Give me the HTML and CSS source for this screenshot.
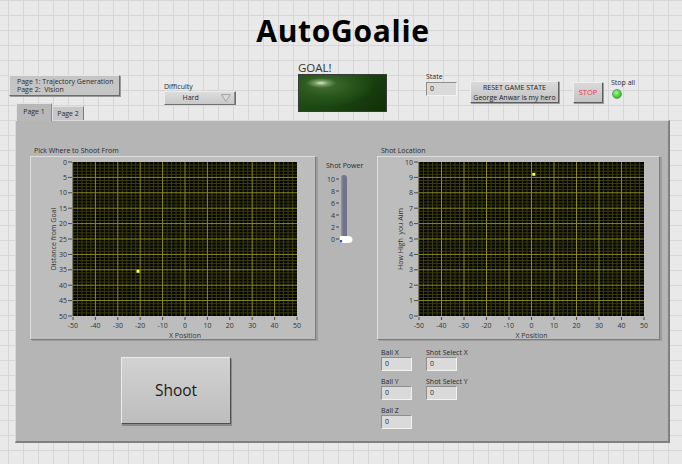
FILE: index.html
```html
<!DOCTYPE html>
<html>
<head>
<meta charset="utf-8">
<link rel="stylesheet" href="styles.css">
</head>
<body>
<div class="page">
  <h1 class="title">AutoGoalie</h1>
  <div class="toprow">
    <div class="leftcol">
      <div class="infobtn">Page 1: Trajectory Generation<br>Page 2:&nbsp; Vision</div>
      <div class="tabs">
        <div class="tab active">Page 1</div>
        <div class="tab">Page 2</div>
      </div>
    </div>
    <div class="difficulty">
      <div class="lbl">Difficulty</div>
      <div class="ring"><span class="ring-text">Hard</span><svg class="ring-arrow" width="10" height="8" viewBox="0 0 10 8"><polygon points="0.5,0.5 9.5,0.5 5,7.5" fill="#dadada" stroke="#a2a2a2" stroke-width="1"/></svg></div>
    </div>
    <div class="goal">
      <div class="goal-lbl">GOAL!</div>
      <div class="goal-led"></div>
    </div>
    <div class="state">
      <div class="lbl">State</div>
      <div class="num">0</div>
    </div>
    <div class="btn reset">RESET GAME STATE<br>George Anwar is my hero</div>
    <div class="btn stop">STOP</div>
    <div class="stopall">
      <div class="lbl">Stop all</div>
      <div class="led"></div>
    </div>
  </div>

  <div class="panel">
    <div class="col-left">
      <div class="glabel">Pick Where to Shoot From</div>
      <div class="frame frame-left">
        <svg class="chart" width="286" height="184" viewBox="0 0 286 184">
          <rect x="43" y="6" width="224" height="154" fill="#050500"/>
          <g transform="translate(43 6) scale(2.24 3.08)">
            <path class="minor" d="M0 0V50M2 0V50M4 0V50M6 0V50M8 0V50M12 0V50M14 0V50M16 0V50M18 0V50M22 0V50M24 0V50M26 0V50M28 0V50M32 0V50M34 0V50M36 0V50M38 0V50M42 0V50M44 0V50M46 0V50M48 0V50M52 0V50M54 0V50M56 0V50M58 0V50M62 0V50M64 0V50M66 0V50M68 0V50M72 0V50M74 0V50M76 0V50M78 0V50M82 0V50M84 0V50M86 0V50M88 0V50M92 0V50M94 0V50M96 0V50M98 0V50"/>
            <path class="minor" d="M0 1H100M0 2H100M0 3H100M0 4H100M0 6H100M0 7H100M0 8H100M0 9H100M0 11H100M0 12H100M0 13H100M0 14H100M0 16H100M0 17H100M0 18H100M0 19H100M0 21H100M0 22H100M0 23H100M0 24H100M0 26H100M0 27H100M0 28H100M0 29H100M0 31H100M0 32H100M0 33H100M0 34H100M0 36H100M0 37H100M0 38H100M0 39H100M0 41H100M0 42H100M0 43H100M0 44H100M0 46H100M0 47H100M0 48H100M0 49H100"/>
            <path class="major" d="M10 0V50M20 0V50M30 0V50M40 0V50M50 0V50M60 0V50M70 0V50M80 0V50M90 0V50M0 5H100M0 10H100M0 15H100M0 20H100M0 25H100M0 30H100M0 35H100M0 40H100M0 45H100"/>
          </g>
          <path class="tick" d="M38 6H42M38 21.4H42M38 36.8H42M38 52.2H42M38 67.6H42M38 83H42M38 98.4H42M38 113.8H42M38 129.2H42M38 144.6H42M38 160H42M43 161V164M65.4 161V164M87.8 161V164M110.2 161V164M132.6 161V164M155 161V164M177.4 161V164M199.8 161V164M222.2 161V164M244.6 161V164M267 161V164"/>
          <g class="ylab">
            <text x="37" y="8.5">0</text>
            <text x="37" y="23.9">5</text>
            <text x="37" y="39.3">10</text>
            <text x="37" y="54.7">15</text>
            <text x="37" y="70.1">20</text>
            <text x="37" y="85.5">25</text>
            <text x="37" y="100.9">30</text>
            <text x="37" y="116.3">35</text>
            <text x="37" y="131.7">40</text>
            <text x="37" y="147.1">45</text>
            <text x="37" y="162.5">50</text>
          </g>
          <g class="xlab">
            <text x="43" y="171.5">-50</text>
            <text x="65.4" y="171.5">-40</text>
            <text x="87.8" y="171.5">-30</text>
            <text x="110.2" y="171.5">-20</text>
            <text x="132.6" y="171.5">-10</text>
            <text x="155" y="171.5">0</text>
            <text x="177.4" y="171.5">10</text>
            <text x="199.8" y="171.5">20</text>
            <text x="222.2" y="171.5">30</text>
            <text x="244.6" y="171.5">40</text>
            <text x="267" y="171.5">50</text>
          </g>
          <text class="axtitle" x="155" y="181.5">X Position</text>
          <text class="axtitle" x="-83" y="25.5" transform="rotate(-90)">Distance from Goal</text>
          <rect class="pt" x="106.5" y="113.8" width="3" height="3"/>
        </svg>
      </div>
      <div class="shoot">Shoot</div>
    </div>

    <div class="col-slider">
      <div class="lbl">Shot Power</div>
      <svg class="slider" width="40" height="80" viewBox="0 0 40 80">
        <g class="slab">
          <text x="9" y="11.5">10</text>
          <text x="9" y="23.5">8</text>
          <text x="9" y="35.5">6</text>
          <text x="9" y="47.5">4</text>
          <text x="9" y="59.5">2</text>
          <text x="9" y="71.5">0</text>
        </g>
        <path class="tick" d="M10 9H13M10 21H13M10 33H13M10 45H13M10 57H13M10 69H13"/>
        <rect x="15" y="5" width="6" height="67" rx="3" fill="#72728c"/>
        <rect x="15" y="6" width="1.5" height="64" fill="#8e8ea6"/>
        <path class="thumb" d="M14 66H22Q26.5 66 26.5 69.5Q26.5 73 22 73H14Z"/>
        <rect x="14" y="70" width="2" height="2.5" fill="#2f4fd8"/>
      </svg>
    </div>

    <div class="col-right">
      <div class="glabel">Shot Location</div>
      <div class="frame frame-right">
        <svg class="chart" width="283" height="184" viewBox="0 0 283 184">
          <rect x="42" y="6" width="225" height="154" fill="#050500"/>
          <g transform="translate(42 6) scale(2.25 3.08)">
            <path class="minor" d="M0 0V50M2 0V50M4 0V50M6 0V50M8 0V50M12 0V50M14 0V50M16 0V50M18 0V50M22 0V50M24 0V50M26 0V50M28 0V50M32 0V50M34 0V50M36 0V50M38 0V50M42 0V50M44 0V50M46 0V50M48 0V50M52 0V50M54 0V50M56 0V50M58 0V50M62 0V50M64 0V50M66 0V50M68 0V50M72 0V50M74 0V50M76 0V50M78 0V50M82 0V50M84 0V50M86 0V50M88 0V50M92 0V50M94 0V50M96 0V50M98 0V50"/>
            <path class="minor" d="M0 1H100M0 2H100M0 3H100M0 4H100M0 6H100M0 7H100M0 8H100M0 9H100M0 11H100M0 12H100M0 13H100M0 14H100M0 16H100M0 17H100M0 18H100M0 19H100M0 21H100M0 22H100M0 23H100M0 24H100M0 26H100M0 27H100M0 28H100M0 29H100M0 31H100M0 32H100M0 33H100M0 34H100M0 36H100M0 37H100M0 38H100M0 39H100M0 41H100M0 42H100M0 43H100M0 44H100M0 46H100M0 47H100M0 48H100M0 49H100"/>
            <path class="major" d="M10 0V50M20 0V50M30 0V50M40 0V50M50 0V50M60 0V50M70 0V50M80 0V50M90 0V50M0 5H100M0 10H100M0 15H100M0 20H100M0 25H100M0 30H100M0 35H100M0 40H100M0 45H100"/>
          </g>
          <path class="tick" d="M37 6H41M37 21.4H41M37 36.8H41M37 52.2H41M37 67.6H41M37 83H41M37 98.4H41M37 113.8H41M37 129.2H41M37 144.6H41M37 160H41M42 161V164M64.5 161V164M87 161V164M109.5 161V164M132 161V164M154.5 161V164M177 161V164M199.5 161V164M222 161V164M244.5 161V164M267 161V164"/>
          <g class="ylab">
            <text x="36" y="8.5">10</text>
            <text x="36" y="23.9">9</text>
            <text x="36" y="39.3">8</text>
            <text x="36" y="54.7">7</text>
            <text x="36" y="70.1">6</text>
            <text x="36" y="85.5">5</text>
            <text x="36" y="100.9">4</text>
            <text x="36" y="116.3">3</text>
            <text x="36" y="131.7">2</text>
            <text x="36" y="147.1">1</text>
            <text x="36" y="162.5">0</text>
          </g>
          <g class="xlab">
            <text x="42" y="171.5">-50</text>
            <text x="64.5" y="171.5">-40</text>
            <text x="87" y="171.5">-30</text>
            <text x="109.5" y="171.5">-20</text>
            <text x="132" y="171.5">-10</text>
            <text x="154.5" y="171.5">0</text>
            <text x="177" y="171.5">10</text>
            <text x="199.5" y="171.5">20</text>
            <text x="222" y="171.5">30</text>
            <text x="244.5" y="171.5">40</text>
            <text x="267" y="171.5">50</text>
          </g>
          <text class="axtitle" x="154.5" y="181.5">X Position</text>
          <text class="axtitle" x="-83" y="25.5" transform="rotate(-90)">How High&#160; you Aim</text>
          <rect class="pt" x="155.3" y="16.8" width="3" height="3"/>
        </svg>
      </div>
      <div class="fields">
        <div class="field"><div class="lbl">Ball X</div><div class="num">0</div></div>
        <div class="field"><div class="lbl">Shot Select X</div><div class="num">0</div></div>
        <div class="field"><div class="lbl">Ball Y</div><div class="num">0</div></div>
        <div class="field"><div class="lbl">Shot Select Y</div><div class="num">0</div></div>
        <div class="field"><div class="lbl">Ball Z</div><div class="num">0</div></div>
      </div>
    </div>
  </div>
</div>
</body>
</html>
```
FILE: styles.css
```css
* { box-sizing: border-box; }
html, body { margin: 0; padding: 0; }
body {
  width: 682px;
  height: 464px;
  overflow: hidden;
  font-family: "Open Sans", "DejaVu Sans", sans-serif;
  font-size: 7px;
  color: #2a2a2a;
  background-color: #e9e9e9;
  background-image:
    linear-gradient(#d6d6d6 1px, transparent 1px),
    linear-gradient(90deg, #d6d6d6 1px, transparent 1px);
  background-size: 15px 15px;
  background-position: 8px 0;
}
.page { width: 682px; height: 464px; }

.title {
  margin: 0;
  height: 62px;
  padding: 11px 0 0 4px;
  font-size: 30px;
  font-weight: 700;
  letter-spacing: 0.7px;
  line-height: 40px;
  text-align: center;
  color: #000;
}

.toprow {
  display: flex;
  align-items: flex-start;
  height: 58px;
}
.lbl { line-height: 9px; white-space: nowrap; }

.leftcol {
  margin: 13px 0 0 9px;
  width: 111px;
  display: flex;
  flex-direction: column;
}
.infobtn {
  height: 21px;
  padding: 2px 0 0 7px;
  line-height: 8px;
  background: #c5c5c5;
  border: 1px solid;
  border-color: #e6e6e6 #6c6c6c #6c6c6c #e6e6e6;
  box-shadow: 1px 1px 0 #9a9a9a;
}
.tabs {
  margin: 7px 0 0 7px;
  height: 17px;
  display: flex;
  align-items: flex-end;
}
.tab {
  width: 32px;
  height: 14px;
  padding-top: 2px;
  text-align: center;
  background: #c7c7c7;
  border: 1px solid;
  border-bottom: none;
  border-color: #e2e2e2 #7a7a7a #7a7a7a #e2e2e2;
}
.tab.active {
  width: 36px;
  height: 18px;
  padding-top: 3px;
  background: #b8b8b8;
  border-right-color: #8a8a8a;
  position: relative;
  z-index: 1;
  margin-bottom: -1px;
}

.difficulty { margin: 20px 0 0 44px; }
.ring {
  width: 72px;
  height: 14px;
  display: flex;
  align-items: center;
  background: linear-gradient(#dcdcdc, #c9c9c9);
  border: 1px solid;
  border-color: #ececec #707070 #707070 #ececec;
}
.ring-text { width: 52px; text-align: center; line-height: 12px; }
.ring-arrow { margin-left: 5px; }
.ring::after {
  content: "";
  margin-left: 3px;
  width: 1px;
  height: 12px;
  background: #8a8a8a;
}

.goal { margin-left: 62px; }
.goal-lbl {
  font-size: 11.5px;
  line-height: 12px;
  color: #333;
}
.goal-led {
  width: 89px;
  height: 38px;
  border: 1px solid #3a3a3a;
  background:
    radial-gradient(ellipse 15px 5px at 22px 8px, rgba(235,245,225,0.9), rgba(170,205,150,0.5) 45%, rgba(80,130,60,0) 100%),
    radial-gradient(ellipse 50px 22px at 26px 10px, #456f32, #28561a 55%, rgba(30,70,16,0) 100%),
    linear-gradient(135deg, #22501a, #1a4311 55%, #112f08);
}

.state { margin: 10px 0 0 39px; }
.state .lbl { line-height: 10px; }
.num {
  width: 31px;
  height: 14px;
  padding-left: 3px;
  line-height: 12px;
  background: #dadada;
  border: 1px solid;
  border-color: #8e8e8e #f2f2f2 #f2f2f2 #8e8e8e;
}

.btn {
  text-align: center;
  background: linear-gradient(#d9d9d9, #c3c3c3);
  border: 1px solid;
  border-color: #eeeeee #5e5e5e #5e5e5e #eeeeee;
  box-shadow: 1px 1px 0 #9c9c9c;
}
.reset {
  margin: 19px 0 0 13px;
  width: 89px;
  height: 22px;
  padding-top: 1px;
  line-height: 9.5px;
  color: #222;
}
.stop {
  margin: 20px 0 0 14px;
  width: 30px;
  height: 21px;
  line-height: 19px;
  color: #e8324a;
  font-size: 7.5px;
}
.stopall { margin: 16px 0 0 8px; }
.stopall .lbl { line-height: 10px; }
.led {
  margin: 1px 0 0 1px;
  width: 10px;
  height: 10px;
  border-radius: 50%;
  border: 1px solid #7c8c7c;
  background: radial-gradient(circle at 40% 35%, #9cff8c, #3fd233 55%, #25a11c);
}

.panel {
  margin-left: 15px;
  width: 655px;
  height: 323px;
  display: flex;
  padding: 25px 0 0 14px;
  background: #b5b5b5;
  border: 1px solid;
  border-width: 1px 2px 2px 1px;
  border-color: #d8d8d8 #808080 #808080 #d8d8d8;
}
.glabel { line-height: 10px; white-space: nowrap; padding-left: 4px; }
.col-left { width: 286px; }
.frame {
  height: 184px;
  background: #bdbdbd;
  border: 1px solid;
  border-color: #dedede #7c7c7c #7c7c7c #dedede;
  box-shadow: 2px 1px 0 #9c9c9c;
}
.frame-left { width: 286px; }
.frame-right { width: 283px; }
.chart { display: block; margin: -1px 0 0 -1px; overflow: visible; }
.chart path, .slider path { fill: none; vector-effect: non-scaling-stroke; }
.slider path.thumb { fill: #ffffff; }
.chart .minor { stroke: #3c3c0e; stroke-width: 1; }
.chart .major { stroke: #8c8c22; stroke-width: 1; }
.tick { stroke: #4a4a4a; stroke-width: 1; }
.chart text, .slider text {
  font-family: "Open Sans", "DejaVu Sans", sans-serif;
  font-size: 7px;
  fill: #333;
}
.ylab text, .slab text { text-anchor: end; }
.xlab text, .axtitle { text-anchor: middle; }
.pt { fill: #ffff48; }

.shoot {
  margin: 17px 0 0 91px;
  width: 110px;
  height: 67px;
  font-size: 15.5px;
  line-height: 65px;
  text-align: center;
  color: #1a1a1a;
  background: linear-gradient(#d2d2d2, #bdbdbd);
  border: 1px solid;
  border-color: #ececec #4e4e4e #4e4e4e #ececec;
  box-shadow: 1px 2px 0 #8a8a8a;
}

.col-slider {
  margin-left: 10px;
  width: 40px;
  padding-top: 15px;
}
.slider { display: block; }

.col-right { margin-left: 11px; width: 283px; }
.fields {
  margin: 8px 0 0 4px;
  display: grid;
  grid-template-columns: 45px 45px;
  row-gap: 6px;
}
```
